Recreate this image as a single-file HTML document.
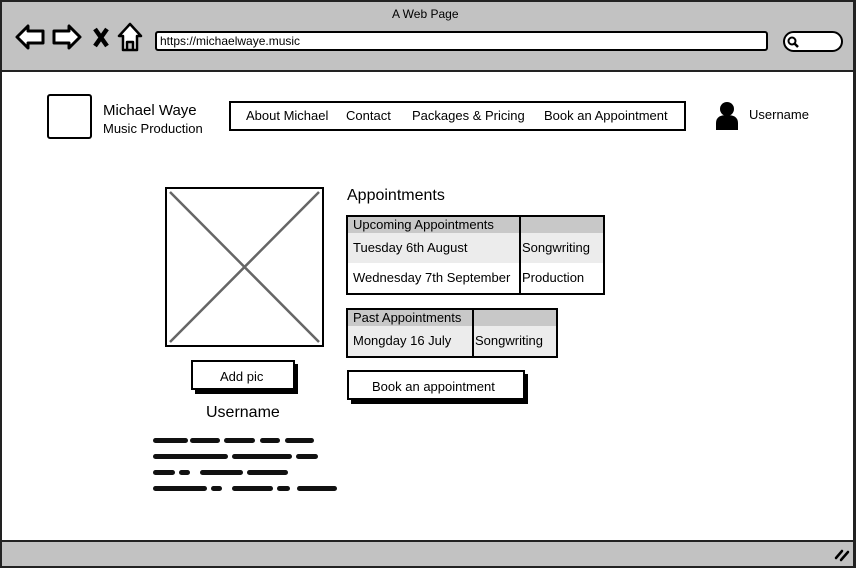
<!DOCTYPE html>
<html><head><meta charset="utf-8"><style>
*{margin:0;padding:0;box-sizing:border-box}
body{width:856px;height:568px;background:#fff;font-family:"Liberation Sans",sans-serif;color:#000;position:relative;overflow:hidden}
.a{position:absolute}
.t{position:absolute;white-space:nowrap;line-height:1}
.box{position:absolute;border:2px solid #000}
.bar{position:absolute;height:5px;background:#111;border-radius:3px}
</style></head><body>
<div class="a" style="left:0;top:0;width:856px;height:568px;border:2px solid #222;border-right-width:3px"></div>
<div class="a" style="left:2px;top:2px;width:851px;height:70px;background:#c2c2c2;border-bottom:2px solid #222"></div>
<div class="t" style="left:392px;top:8px;font-size:12px">A Web Page</div>
<svg class="a" style="left:14px;top:21px" width="130" height="34" viewBox="0 0 130 34">
<path d="M3 16 L14 5 L14 10 L29 10 L29 22 L14 22 L14 27 Z" fill="#fff" stroke="#000" stroke-width="3" stroke-linejoin="round"/>
<path d="M66 16 L55 5 L55 10 L40 10 L40 22 L55 22 L55 27 Z" fill="#fff" stroke="#000" stroke-width="3" stroke-linejoin="round"/>
<path d="M81 8 L93 25 M93 8 L81 25" stroke="#000" stroke-width="4.5"/>
<path d="M116 3 L105 15 L109 15 L109 29 L123 29 L123 15 L127 15 Z M113 29 L113 21 L119 21 L119 29" fill="#fff" stroke="#000" stroke-width="2.5" stroke-linejoin="round"/>
</svg>
<div class="a" style="left:155px;top:31px;width:613px;height:20px;background:#fff;border:2px solid #000;border-radius:3px"></div>
<div class="t" style="left:160px;top:35px;font-size:12px">https://michaelwaye.music</div>
<div class="a" style="left:783px;top:31px;width:60px;height:21px;background:#fff;border:2px solid #000;border-radius:11px"></div>
<svg class="a" style="left:786px;top:35px" width="14" height="14"><circle cx="6" cy="6" r="3.5" fill="none" stroke="#000" stroke-width="2"/><path d="M8 8 L12 12" stroke="#000" stroke-width="2.5"/></svg>

<div class="box" style="left:47px;top:94px;width:45px;height:45px;border-radius:3px"></div>
<div class="t" style="left:103px;top:103px;font-size:15px">Michael Waye</div>
<div class="t" style="left:103px;top:122px;font-size:13px">Music Production</div>
<div class="box" style="left:229px;top:101px;width:457px;height:30px"></div>
<div class="t" style="left:246px;top:109px;font-size:13px">About Michael</div>
<div class="t" style="left:346px;top:109px;font-size:13px">Contact</div>
<div class="t" style="left:412px;top:109px;font-size:13px">Packages &amp; Pricing</div>
<div class="t" style="left:544px;top:109px;font-size:13px">Book an Appointment</div>
<svg class="a" style="left:714px;top:101px" width="26" height="30"><circle cx="13" cy="8" r="7" fill="#000"/><path d="M2 29 L2 22 Q2 14 13 14 Q24 14 24 22 L24 29 Z" fill="#000"/></svg>
<div class="t" style="left:749px;top:108px;font-size:13px">Username</div>

<div class="box" style="left:165px;top:187px;width:159px;height:160px"></div>
<svg class="a" style="left:165px;top:187px" width="159" height="160"><path d="M5 5 L154 155 M154 5 L5 155" stroke="#666" stroke-width="2.5"/></svg>
<div class="a" style="left:195px;top:364px;width:103px;height:30px;background:#000"></div>
<div class="box" style="left:191px;top:360px;width:104px;height:30px;background:#fff"></div>
<div class="t" style="left:220px;top:370px;font-size:13px">Add pic</div>
<div class="t" style="left:206px;top:405px;font-size:16px">Username</div>

<div class="bar" style="left:153px;top:438px;width:35px"></div><div class="bar" style="left:190px;top:438px;width:30px"></div><div class="bar" style="left:224px;top:438px;width:31px"></div><div class="bar" style="left:260px;top:438px;width:20px"></div><div class="bar" style="left:285px;top:438px;width:29px"></div>
<div class="bar" style="left:153px;top:454px;width:75px"></div><div class="bar" style="left:232px;top:454px;width:60px"></div><div class="bar" style="left:296px;top:454px;width:22px"></div>
<div class="bar" style="left:153px;top:470px;width:22px"></div><div class="bar" style="left:179px;top:470px;width:11px"></div><div class="bar" style="left:200px;top:470px;width:43px"></div><div class="bar" style="left:247px;top:470px;width:41px"></div>
<div class="bar" style="left:153px;top:486px;width:54px"></div><div class="bar" style="left:211px;top:486px;width:11px"></div><div class="bar" style="left:232px;top:486px;width:41px"></div><div class="bar" style="left:277px;top:486px;width:13px"></div><div class="bar" style="left:297px;top:486px;width:40px"></div>

<div class="t" style="left:347px;top:188px;font-size:16px">Appointments</div>
<div class="a" style="left:348px;top:217px;width:255px;height:16px;background:#c8c8c8"></div>
<div class="a" style="left:348px;top:233px;width:255px;height:30px;background:#ececec"></div>
<div class="box" style="left:346px;top:215px;width:259px;height:80px"></div>
<div class="a" style="left:519px;top:216px;width:2px;height:78px;background:#000"></div>
<div class="t" style="left:353px;top:218px;font-size:13px">Upcoming Appointments</div>
<div class="t" style="left:353px;top:241px;font-size:13px">Tuesday 6th August</div>
<div class="t" style="left:522px;top:241px;font-size:13px">Songwriting</div>
<div class="t" style="left:353px;top:271px;font-size:13px">Wednesday 7th September</div>
<div class="t" style="left:522px;top:271px;font-size:13px">Production</div>

<div class="a" style="left:348px;top:310px;width:208px;height:16px;background:#c8c8c8"></div>
<div class="a" style="left:348px;top:326px;width:208px;height:31px;background:#ececec"></div>
<div class="box" style="left:346px;top:308px;width:212px;height:50px"></div>
<div class="a" style="left:472px;top:309px;width:2px;height:48px;background:#000"></div>
<div class="t" style="left:353px;top:311px;font-size:13px">Past Appointments</div>
<div class="t" style="left:353px;top:334px;font-size:13px">Mongday 16 July</div>
<div class="t" style="left:475px;top:334px;font-size:13px">Songwriting</div>

<div class="a" style="left:351px;top:374px;width:177px;height:30px;background:#000"></div>
<div class="box" style="left:347px;top:370px;width:178px;height:30px;background:#fff"></div>
<div class="t" style="left:372px;top:380px;font-size:13px">Book an appointment</div>

<div class="a" style="left:2px;top:540px;width:851px;height:26px;background:#c2c2c2;border-top:2px solid #222"></div>
<svg class="a" style="left:834px;top:548px" width="16" height="14"><path d="M2 10 L8 3 M7 12 L14 4" stroke="#000" stroke-width="2.5" stroke-linecap="round"/></svg>
</body></html>
